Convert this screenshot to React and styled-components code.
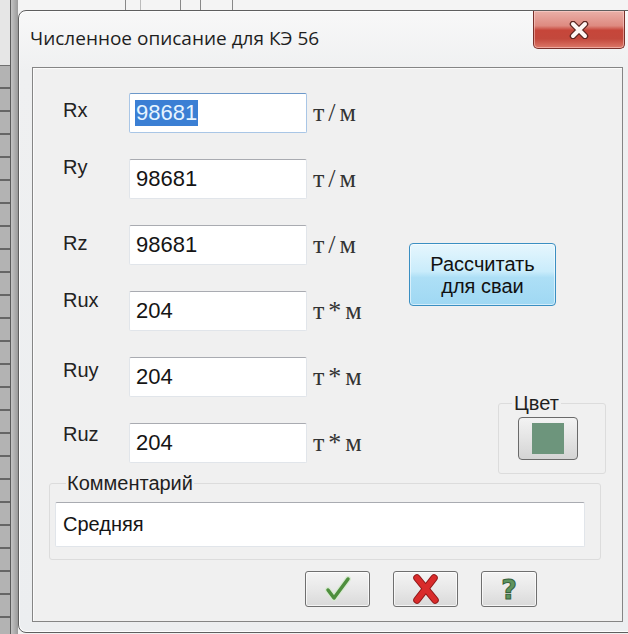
import React from "react";
import styled, { createGlobalStyle } from "styled-components";

const GlobalStyle = createGlobalStyle`
  html, body {
    margin: 0;
    padding: 0;
  }
  body {
    width: 628px;
    height: 634px;
    overflow: hidden;
    background: #f1f1f1;
    font-family: "Liberation Sans", Arial, sans-serif;
    color: #1a1a1a;
  }
`;

const Desktop = styled.div`
  display: flex;
  width: 628px;
  height: 634px;
  overflow: hidden;
`;

const SideRuler = styled.div`
  flex: 0 0 18px;
  background:
    repeating-linear-gradient(
        to bottom,
        transparent 0 21px,
        #666 21px 23px
      )
      0 66px / 10px 100% no-repeat,
    linear-gradient(#707070, #707070) 0 65px / 10px 1px no-repeat,
    linear-gradient(#e6e6e6, #e6e6e6) 0 0 / 10px 66px no-repeat,
    linear-gradient(to right, #5c5c5c 0 1px, #c4c4c4 1px, #9a9a9a 8px) 10px 0 /
      8px 100% no-repeat,
    #b3b3b3;
`;

const Column = styled.div`
  display: flex;
  flex-direction: column;
  flex: 0 0 auto;
`;

const TopRuler = styled.div`
  height: 10px;
  background:
    linear-gradient(#888, #888) 107px 0 / 1px 100% no-repeat,
    linear-gradient(#bbb, #bbb) 122px 0 / 1px 100% no-repeat,
    linear-gradient(#888, #888) 162px 0 / 1px 100% no-repeat,
    linear-gradient(#888, #888) 182px 0 / 1px 100% no-repeat,
    linear-gradient(#888, #888) 214px 0 / 1px 100% no-repeat,
    #f4f4f4;
`;

const Window = styled.div`
  width: 618px;
  box-sizing: border-box;
  border: 1px solid #5f5f5f;
  border-radius: 8px;
  padding: 0 12px 10px 13px;
  background: linear-gradient(to bottom, #f8f8f8, #eff0f1 60px, #eceef0);
  box-shadow: inset 0 0 0 1px #fdfdfd;
  display: flex;
  flex-direction: column;
`;

const TitleBar = styled.div`
  height: 56px;
  display: flex;
  justify-content: space-between;
  align-items: flex-start;
`;

const Title = styled.div`
  margin: 14px 0 0 -2px;
  font-family: "Open Sans", "Noto Sans", sans-serif;
  font-size: 19px;
  color: #1e1e1e;
`;

const CloseButton = styled.div`
  width: 92px;
  height: 38px;
  margin-right: -2px;
  box-sizing: border-box;
  border: 1px solid #7a302a;
  border-top: none;
  border-radius: 0 0 5px 5px;
  background: linear-gradient(
    to bottom,
    #eab0a8 0%,
    #de8a80 40%,
    #c6463a 52%,
    #c3483c 75%,
    #dc7868 100%
  );
  box-shadow: inset 0 0 0 1px rgba(255, 220, 215, 0.5);
  display: flex;
  align-items: center;
  justify-content: center;
`;

const Panel = styled.div`
  height: 555px;
  box-sizing: border-box;
  border: 1px solid #858585;
  background: #f0f0f0;
  box-shadow: inset 1px 1px 0 #fbfbfb;
  display: flex;
  flex-direction: column;
`;

const TopSection = styled.div`
  display: flex;
  padding: 25px 16px 0 30px;
`;

const Fields = styled.div`
  display: grid;
  grid-template-columns: 66px 178px auto;
  grid-auto-rows: 40px;
  row-gap: 26px;
`;

const Label = styled.div`
  align-self: start;
  margin-top: ${(p) => p.$shift}px;
  font-size: 20px;
  line-height: 23px;
  color: #222;
`;

const Field = styled.div`
  box-sizing: border-box;
  border: 1px solid ${(p) => (p.$focused ? "#a9c6e6" : "#e1e5ea")};
  border-top-color: ${(p) => (p.$focused ? "#6c98c9" : "#a9abb1")};
  border-radius: 2px;
  background: #fff;
  padding: 0 5px;
  display: flex;
  align-items: center;
  font-size: 22px;
  color: #151515;
`;

const FieldText = styled.span`
  line-height: 26px;
  padding: 0 1px;
  background: ${(p) => (p.$selected ? "#3b7fd4" : "transparent")};
  color: ${(p) => (p.$selected ? "#e6f4ff" : "inherit")};
`;

/* units are set in a serif face, spaced out like a typewriter font */
const Unit = styled.div`
  align-self: end;
  margin: 0 0 8px 6px;
  font-family: "Liberation Serif", "Times New Roman", serif;
  font-size: 26px;
  line-height: 24px;
  letter-spacing: 4px;
  color: #333;
`;

const Side = styled.div`
  margin-left: auto;
  width: 197px;
  display: flex;
  flex-direction: column;
  align-items: flex-start;
`;

const CalcButton = styled.div`
  margin-top: 150px;
  width: 147px;
  height: 63px;
  box-sizing: border-box;
  border: 1px solid #3a8fc2;
  border-radius: 4px;
  background: linear-gradient(
    to bottom,
    #e6f6fd 0%,
    #c9ecfb 45%,
    #addff6 55%,
    #9fd8f3 100%
  );
  box-shadow: inset 0 0 0 1px rgba(255, 255, 255, 0.55);
  display: flex;
  flex-direction: column;
  align-items: center;
  justify-content: center;
  font-size: 20px;
  line-height: 22px;
  color: #111;
`;

const Group = styled.fieldset`
  margin: 0;
  border: 1px solid #dcdcdc;
  border-radius: 3px;
  min-width: 0;
  box-sizing: border-box;
  legend {
    font-size: 20px;
    line-height: 22px;
    color: #1f1f1f;
  }
`;

const ColorGroup = styled(Group)`
  align-self: flex-end;
  margin-top: 86px;
  width: 108px;
  padding: 3px 27px 13px 19px;
  legend {
    padding: 0 2px;
    margin-left: -6px;
  }
`;

const ColorButton = styled.div`
  width: 60px;
  height: 43px;
  box-sizing: border-box;
  border: 1px solid #6a6a6a;
  border-radius: 4px;
  background: linear-gradient(to bottom, #f3f3f3, #e4e4e4 50%, #d4d4d4);
  display: flex;
  align-items: center;
  justify-content: center;
`;

const Swatch = styled.div`
  width: 32px;
  height: 31px;
  background: ${(p) => p.$color};
`;

const CommentGroup = styled(Group)`
  margin: -2px 21px 0 16px;
  padding: 8px 15px 12px 5px;
  legend {
    padding: 0 1px;
    margin-left: 11px;
  }
`;

const CommentField = styled(Field)`
  height: 45px;
  padding: 0 7px;
  font-size: 20px;
`;

const ButtonRow = styled.div`
  display: flex;
  gap: 23px;
  margin: 11px 0 0 272px;
`;

const IconButton = styled.div`
  width: ${(p) => p.$width}px;
  height: 36px;
  box-sizing: border-box;
  border: 1px solid #6f6f6f;
  border-radius: 3px;
  background: linear-gradient(to bottom, #f4f4f4, #e8e8e8 50%, #d9d9d9);
  box-shadow: inset 0 0 0 1px rgba(255, 255, 255, 0.7);
  display: flex;
  align-items: center;
  justify-content: center;
`;

const HelpMark = styled.span`
  font-family: "DejaVu Sans", sans-serif;
  font-weight: bold;
  font-size: 27px;
  line-height: 27px;
  color: #5e945e;
  -webkit-text-stroke: 1px #35603a;
`;

const rows = [
  { label: "Rx", value: "98681", unit: "т/м", shift: 6, focused: true },
  { label: "Ry", value: "98681", unit: "т/м", shift: -3 },
  { label: "Rz", value: "98681", unit: "т/м", shift: 7 },
  { label: "Rux", value: "204", unit: "т*м", shift: -2 },
  { label: "Ruy", value: "204", unit: "т*м", shift: 2 },
  { label: "Ruz", value: "204", unit: "т*м", shift: 0 },
];

const CloseGlyph = () => (
  <svg width="22" height="18" viewBox="0 0 22 18">
    <path
      d="M5 3 L17 15 M17 3 L5 15"
      stroke="#5a2520"
      strokeWidth="6.5"
      strokeLinecap="round"
    />
    <path
      d="M5 3 L17 15 M17 3 L5 15"
      stroke="#fdf6f4"
      strokeWidth="4"
      strokeLinecap="round"
    />
  </svg>
);

const CheckGlyph = () => (
  <svg width="26" height="26" viewBox="0 0 26 26">
    <path
      d="M3 14 L9 22 L23 3"
      fill="none"
      stroke="#d8ead2"
      strokeWidth="6"
      strokeLinejoin="round"
      strokeLinecap="round"
    />
    <path
      d="M3 14 L9 22 L23 3"
      fill="none"
      stroke="#4f8f3e"
      strokeWidth="3.5"
      strokeLinejoin="round"
      strokeLinecap="round"
    />
  </svg>
);

const CrossGlyph = () => (
  <svg width="30" height="30" viewBox="0 0 30 30">
    <path
      d="M6 4 L24 26 M23 4 L6 26"
      stroke="#8e1818"
      strokeWidth="7.5"
      strokeLinecap="round"
    />
    <path
      d="M6 4 L24 26 M23 4 L6 26"
      stroke="#d92b2b"
      strokeWidth="5.5"
      strokeLinecap="round"
    />
  </svg>
);

export default function App() {
  return (
    <>
      <GlobalStyle />
      <Desktop>
        <SideRuler />
        <Column>
          <TopRuler />
          <Window>
            <TitleBar>
              <Title>Численное описание для КЭ 56</Title>
              <CloseButton>
                <CloseGlyph />
              </CloseButton>
            </TitleBar>
            <Panel>
              <TopSection>
                <Fields>
                  {rows.map((r) => (
                    <React.Fragment key={r.label}>
                      <Label $shift={r.shift}>{r.label}</Label>
                      <Field $focused={r.focused}>
                        <FieldText $selected={r.focused}>{r.value}</FieldText>
                      </Field>
                      <Unit>{r.unit}</Unit>
                    </React.Fragment>
                  ))}
                </Fields>
                <Side>
                  <CalcButton>
                    <span>Рассчитать</span>
                    <span>для сваи</span>
                  </CalcButton>
                  <ColorGroup>
                    <legend>Цвет</legend>
                    <ColorButton>
                      <Swatch $color="#6d957c" />
                    </ColorButton>
                  </ColorGroup>
                </Side>
              </TopSection>
              <CommentGroup>
                <legend>Комментарий</legend>
                <CommentField>Средняя</CommentField>
              </CommentGroup>
              <ButtonRow>
                <IconButton $width={65}>
                  <CheckGlyph />
                </IconButton>
                <IconButton $width={65}>
                  <CrossGlyph />
                </IconButton>
                <IconButton $width={56}>
                  <HelpMark>?</HelpMark>
                </IconButton>
              </ButtonRow>
            </Panel>
          </Window>
        </Column>
      </Desktop>
    </>
  );
}
